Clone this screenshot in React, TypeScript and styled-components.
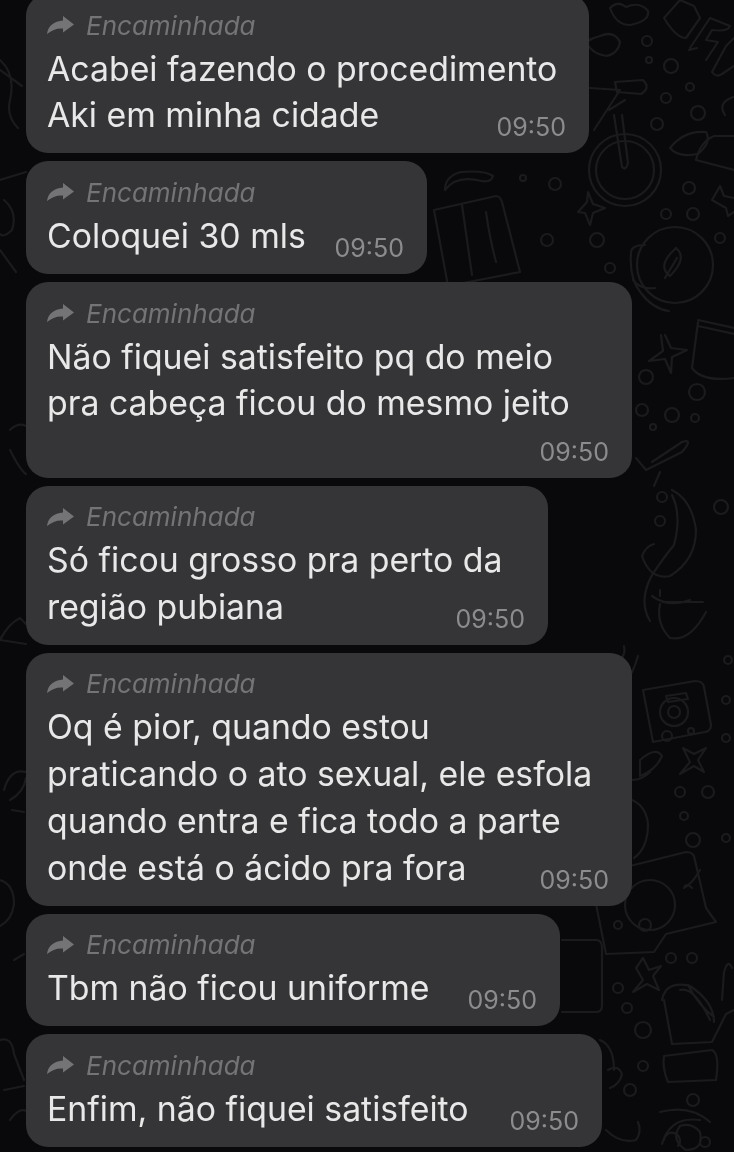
import React from 'react';
import styled, { createGlobalStyle } from 'styled-components';

const GlobalStyle = createGlobalStyle`
  html, body {
    margin: 0;
    background: #09090b;
  }
`;

const Screen = styled.div`
  position: relative;
  width: 734px;
  height: 1152px;
  overflow: hidden;
  background: #09090b;
  font-family: Inter, "Liberation Sans", sans-serif;
`;

const Wallpaper = styled.svg`
  position: absolute;
  inset: 0;
  fill: none;
  stroke: #1b1b1e;
  stroke-width: 2.2;
  stroke-linecap: round;
  stroke-linejoin: round;
  filter: blur(0.7px);
`;

const MessageList = styled.div`
  position: relative;
  display: flex;
  flex-direction: column;
  align-items: flex-start;
  gap: 8px;
  margin-top: -6px;
  padding-left: 26px;
  filter: blur(0.6px);
`;

const Bubble = styled.div<{ $width: number }>`
  display: flex;
  flex-direction: column;
  box-sizing: border-box;
  width: ${(p) => p.$width}px;
  padding: 15px 23px 14px 21px;
  border-radius: 22px;
  background: #353538;
`;

const ForwardRow = styled.div`
  display: flex;
  align-items: center;
  gap: 12px;
  height: 32px;
  margin-bottom: 4.5px;
  color: #747476;
  font-size: 26px;
  font-style: italic;
`;

const ForwardIcon = styled.svg`
  width: 27px;
  height: 18px;
  fill: #747476;
`;

const MessageLine = styled.div`
  align-self: flex-start;
  color: #e8e8e8;
  font-size: 33.8px;
  line-height: 46.7px;
  white-space: nowrap;
`;

const Time = styled.div<{ $ownRow?: boolean }>`
  align-self: flex-end;
  height: 24px;
  margin-top: ${(p) => (p.$ownRow ? '12.5px' : '-23.5px')};
  color: #8c8c8e;
  font-size: 25px;
  line-height: 24px;
`;

const messages = [
  { width: 563, lines: ['Acabei fazendo o procedimento', 'Aki em minha cidade'] },
  { width: 401, lines: ['Coloquei 30 mls'] },
  { width: 606, lines: ['Não fiquei satisfeito pq do meio', 'pra cabeça ficou do mesmo jeito'], ownRow: true },
  { width: 522, lines: ['Só ficou grosso pra perto da', 'região pubiana'] },
  {
    width: 606,
    lines: [
      'Oq é pior, quando estou',
      'praticando o ato sexual, ele esfola',
      'quando entra e fica todo a parte',
      'onde está o ácido pra fora',
    ],
  },
  { width: 534, lines: ['Tbm não ficou uniforme'] },
  { width: 576, lines: ['Enfim, não fiquei satisfeito'] },
];

const dots = [
  [647, 41, 5], [649, 60, 3], [671, 66, 7], [690, 87, 4], [666, 98, 5], [657, 124, 6], [698, 113, 7],
  [689, 188, 6], [555, 184, 6], [523, 178, 3], [666, 214, 5], [693, 214, 6], [597, 240, 7],
  [610, 268, 5], [547, 240, 6], [720, 238, 5], [646, 377, 7], [697, 392, 8], [642, 410, 6], [672, 415, 7],
  [695, 418, 4], [653, 427, 3], [662, 497, 5], [721, 507, 7], [660, 521, 5], [667, 736, 5], [691, 731, 3],
  [680, 792, 5], [708, 792, 6], [684, 816, 4], [693, 840, 7], [618, 925, 4], [645, 925, 6], [671, 958, 5],
  [692, 958, 5], [618, 988, 5], [627, 1008, 5], [643, 1030, 8], [643, 1066, 5], [630, 1090, 6], [693, 1100, 6],
  [705, 1142, 5], [726, 838, 4], [728, 660, 4], [726, 700, 4], [726, 738, 4],
];

const doodles = [
  // hearts and camera at the top
  'M610 8 q8 -8 16 -1 q14 -6 22 4 q2 10 -18 14 q-14 0 -20 -17 Z',
  'M600 36 q14 -6 20 6 q-2 12 -14 14 q-14 -2 -20 -14 q6 -4 14 -6',
  'M664 18 l16 -18 l14 6 l6 12 l-14 20 q-10 0 -22 -20 Z',
  'M690 48 l20 -30 l20 8 q-2 6 -18 4 l-6 10 l12 2 l-12 18 M689 50 l8 -2',
  'M712 72 l14 -26 l8 -8 M712 72 q4 6 10 2 l12 -8',
  // bicycle
  'M590 88 l30 2 l-26 40 M615 82 l28 -2 q8 8 -2 14 l-24 -2 Z M625 100 l-16 10 M614 115 l8 52 q4 4 6 -4 l-6 -48',
  // leaf, pot
  'M670 148 q14 -18 36 -16 q6 10 -8 22 q-20 4 -28 -6 Z',
  'M696 160 q4 -18 18 -24 l20 0 M696 160 l38 10',
  'M712 200 l8 -14 l4 10 l10 2 M712 200 l14 8 l2 8 l6 -4',
  'M725 115 q-8 -12 8 -18',
  // book
  'M434 210 l62 -14 q4 0 6 6 l18 70 l-72 14 l-14 -76 Z M462 205 l10 70 M486 212 q4 28 10 50',
  'M445 190 q10 -14 32 -10 q14 4 16 -4 q-8 -6 -32 -4 q-16 4 -16 18',
  'M578 212 l9 -10 l1 -10 l5 12 l12 4 l-12 5 l-3 12 l-5 -12 Z',
  // coffee cup with leaf
  'M645 245 q-14 0 -14 8 q-2 26 10 40 q12 16 28 18 M633 280 q8 10 22 8',
  'M676 248 q12 10 -6 28 q-14 -10 6 -28 M665 278 l12 -20',
  'M698 320 l36 8 M698 326 l36 8 M698 322 l-6 46 q10 14 42 10',
  'M661 335 l2 16 l-14 10 l16 -2 l6 14 l1 -16 l15 -7 l-16 -2 l-6 -13',
  'M652 462 l30 -20 q12 -4 0 10 l-36 18 l-10 -12 M660 472 l-6 14',
  'M672 495 q10 20 2 50 q-10 12 -22 30 q-14 26 -2 46 M672 490 q20 10 24 40 q0 30 -26 46 q-20 4 -28 -20 q4 -10 12 -12',
  'M652 596 q16 12 38 4 M660 596 l0 -6 M665 602 l38 0 M660 604 q-4 20 10 34 q20 4 36 -26',
  // lower right
  'M643 690 l52 -9 q8 0 9 6 l7 38 q0 6 -6 7 l-52 10 l-10 -52 Z',
  'M666 696 l20 -3 l2 6 l-20 3 Z',
  'M683 748 l7 14 l-10 12 l14 -8 l10 6 l-6 -12 l8 -12 l-12 6 Z',
  'M640 760 q16 -14 22 -4 q-6 14 -22 20 Z M632 780 q10 0 18 -8',
  'M632 800 q14 6 16 24 q0 24 -14 34',
  'M630 866 l56 -14 q6 0 8 4 l12 52 l10 14 l-50 12 l-12 18 l-48 2 l-12 -60',
  'M700 870 q-8 14 -16 18 M692 888 q-6 -6 -8 0',
  'M562 940 l34 0 q6 0 6 8 l0 58 q0 6 -6 6 l-34 0',
  'M636 968 l7 12 l-10 12 l14 -8 l12 6 l-6 -14 l8 -10 l-12 4 l-6 -12 Z',
  'M662 1000 q4 -20 28 -14 q24 16 24 36 M688 985 q10 20 26 32 M680 990 q14 -4 30 30',
  'M664 1000 l8 44 l40 -2 l14 -28 l8 -4 M722 1000 l2 -28 q4 -14 8 -4',
  'M664 1056 l48 -6 q8 4 4 30 l-48 2 q-6 -14 -4 -26 Z',
  'M660 1112 q30 -8 50 10 M700 1120 q-30 -4 -38 24',
  'M664 1140 a8 8 0 1 1 14 6 M680 1126 q-10 14 6 24 q18 0 14 -18 q-8 -10 -20 -6',
  'M608 1070 q10 -6 14 4 q-2 10 -12 14 M600 1040 q14 6 14 30',
  'M606 1130 q14 14 30 10 q6 -8 2 -18',
  'M608 700 q20 -10 30 -44 M620 660 q6 -6 4 -14',
  // left edge
  'M0 60 q16 14 10 40 q-4 16 8 28 M0 70 l22 16',
  'M0 180 l26 -8 M4 200 q14 12 8 30 q-8 8 -12 4 M0 250 l16 22',
  'M10 430 q8 -8 16 -4 M10 450 q10 20 16 24',
  'M0 640 q8 -16 20 -22 l6 6 M0 640 l26 4',
  'M4 790 q6 -22 22 -18 M10 800 q14 -8 16 -22 M12 810 l12 2',
  'M0 880 q14 4 14 24 q-2 16 -14 22 M0 1040 q12 -4 14 14 M14 1054 l10 26',
  'M14 960 l10 -6 M4 1090 l20 -4 M10 1120 q10 -14 18 -8',
];

const App = () => (
  <Screen>
    <GlobalStyle />
    <Wallpaper viewBox="0 0 734 1152" aria-hidden="true">
      {dots.map(([x, y, r]) => (
        <circle key={`${x}-${y}`} cx={x} cy={y} r={r} />
      ))}
      <circle cx="625" cy="170" r="36" />
      <circle cx="625" cy="170" r="29" />
      <circle cx="675" cy="265" r="38" />
      <circle cx="674" cy="712" r="14" />
      <circle cx="674" cy="712" r="6" />
      <circle cx="650" cy="905" r="25" />
      {doodles.map((d) => (
        <path key={d} d={d} />
      ))}
    </Wallpaper>
    <MessageList>
      {messages.map((m) => (
        <Bubble key={m.lines[0]} $width={m.width}>
          <ForwardRow>
            <ForwardIcon viewBox="0 0 27 18">
              <path d="M16 0 L27 8.5 L16 16.5 V12.5 C10 12 5 14 0 18 C1 10 7 5 16 4.5 Z" />
            </ForwardIcon>
            Encaminhada
          </ForwardRow>
          {m.lines.map((line) => (
            <MessageLine key={line}>{line}</MessageLine>
          ))}
          <Time $ownRow={m.ownRow}>09:50</Time>
        </Bubble>
      ))}
    </MessageList>
  </Screen>
);

export default App;
